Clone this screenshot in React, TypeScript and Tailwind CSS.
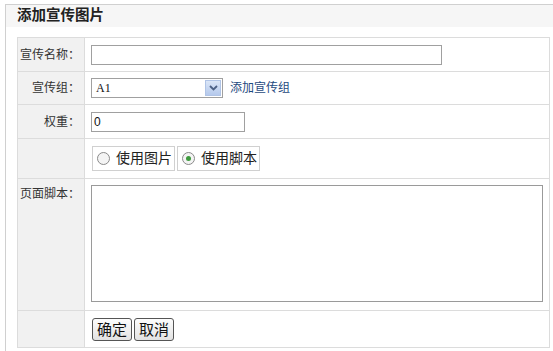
const font = { fontFamily: '"Liberation Sans", "Noto Sans CJK SC", sans-serif' }

function Label({ text, top }: { text: string; top?: boolean }) {
    return (
        <div className={`w-[67px] shrink-0 bg-[#f1f1f1] border-r border-[#dcdcdc] flex justify-end pr-[4px] text-[12px] text-[#333] ${top ? 'items-start pt-[6px]' : 'items-center'}`}>
            {text}
        </div>
    )
}

function Radio({ checked, label }: { checked?: boolean; label: string }) {
    return (
        <div className="flex items-center h-[25px] border border-[#d0d0d0] pl-[4px] pr-[2px] gap-[6px]">
            <span className="w-[13px] h-[13px] rounded-full border border-[#8a8a8a] bg-[#f4f4f4] flex items-center justify-center">
                {checked && <span className="w-[5px] h-[5px] rounded-full bg-[#3d9a3d]" />}
            </span>
            <span className="text-[14px] text-[#222]">{label}</span>
        </div>
    )
}

function Button({ text }: { text: string }) {
    return (
        <button className="h-[23px] px-[4px] border border-[#555] rounded-[3px] bg-gradient-to-b from-[#fdfdfd] to-[#e2e2e2] text-[15px] leading-none text-[#111]">
            {text}
        </button>
    )
}

export default function App() {
    return (
        <div className="w-[553px] h-[351px] bg-white pt-[4px] pl-[5px] overflow-hidden" style={font}>
            <div className="border-l border-t border-[#d0d0d0] h-full">
                <div className="h-[22px] bg-[#f6f6f6] pl-[11px] flex items-center text-[14.5px] font-bold text-[#222]">
                    添加宣传图片
                </div>
                <div className="pt-[10px] pl-[11px]">
                    <div className="w-[533px] border border-[#dcdcdc]">
                        <div className="flex h-[34px] border-b border-[#dcdcdc]">
                            <Label text="宣传名称：" />
                            <div className="flex items-center pl-[6px]">
                                <div className="w-[351px] h-[20px] border border-[#a0a0a0] bg-white" />
                            </div>
                        </div>
                        <div className="flex h-[33px] border-b border-[#dcdcdc]">
                            <Label text="宣传组：" />
                            <div className="flex items-center pl-[6px] gap-[7px]">
                                <div className="w-[132px] h-[20px] border border-[#a0a0a0] bg-white flex items-center justify-between">
                                    <span className="pl-[4px] text-[12px] text-[#111]" style={{ fontFamily: '"Liberation Serif", serif' }}>A1</span>
                                    <span className="w-[16px] h-[16px] mr-[1px] bg-gradient-to-b from-[#dbe6f7] to-[#b5c9ec] border border-[#b0c4e6] flex items-center justify-center">
                                        <svg width="9" height="6" viewBox="0 0 9 6"><path d="M1 1 L4.5 4.5 L8 1" stroke="#4d6185" strokeWidth="1.8" fill="none" /></svg>
                                    </span>
                                </div>
                                <span className="text-[12px] text-[#1f4a80]">添加宣传组</span>
                            </div>
                        </div>
                        <div className="flex h-[34px] border-b border-[#dcdcdc]">
                            <Label text="权重：" />
                            <div className="flex items-center pl-[6px]">
                                <div className="w-[154px] h-[20px] border border-[#a0a0a0] bg-white flex items-center pl-[2px] text-[12px] text-[#111]">0</div>
                            </div>
                        </div>
                        <div className="flex h-[40px] border-b border-[#dcdcdc]">
                            <Label text="" />
                            <div className="flex items-center pl-[7px] gap-[2px]">
                                <Radio label="使用图片" />
                                <Radio checked label="使用脚本" />
                            </div>
                        </div>
                        <div className="flex h-[132px] border-b border-[#dcdcdc]">
                            <Label text="页面脚本：" top />
                            <div className="pl-[6px] pt-[6px]">
                                <div className="w-[452px] h-[117px] border border-[#9a9a9a] bg-white" />
                            </div>
                        </div>
                        <div className="flex h-[36px]">
                            <Label text="" />
                            <div className="flex items-center pl-[7px] gap-[2px]">
                                <Button text="确定" />
                                <Button text="取消" />
                            </div>
                        </div>
                    </div>
                </div>
            </div>
        </div>
    )
}
